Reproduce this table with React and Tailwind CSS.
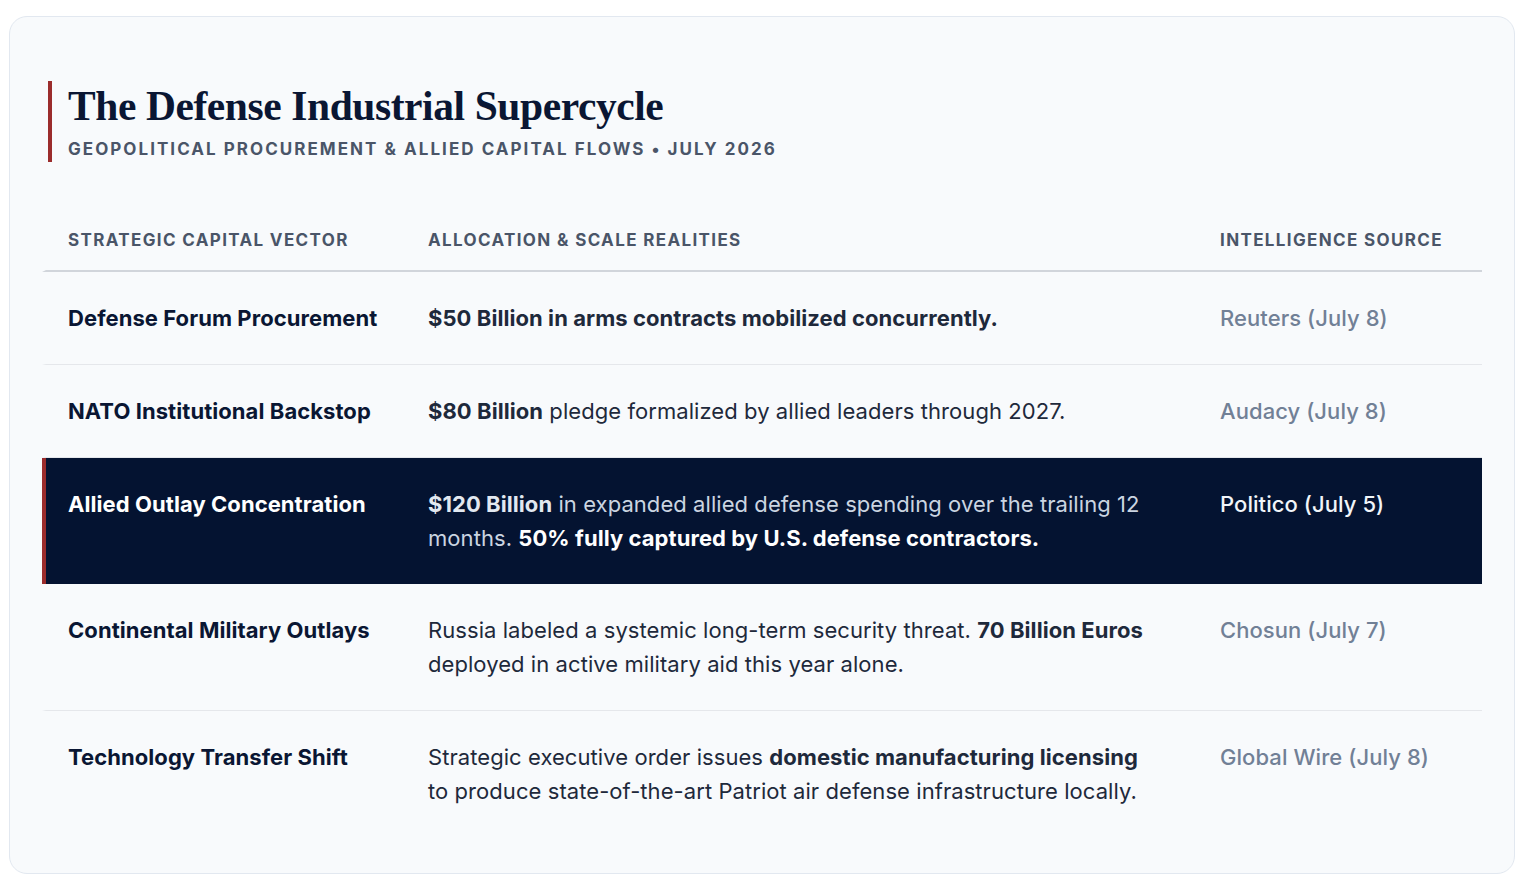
import React from "react";

const rows = [
  {
    vector: "Defense Forum Procurement",
    detail: (
      <>
        <b className="font-bold">$50 Billion in arms contracts mobilized concurrently.</b>
      </>
    ),
    source: "Reuters (July 8)",
  },
  {
    vector: "NATO Institutional Backstop",
    detail: (
      <>
        <b className="font-bold">$80 Billion</b> pledge formalized by allied leaders through 2027.
      </>
    ),
    source: "Audacy (July 8)",
  },
  {
    vector: "Allied Outlay Concentration",
    detail: (
      <>
        <b className="font-bold text-[#e2e8f0]">$120 Billion</b> in expanded allied defense spending over the trailing 12
        months. <b className="font-bold text-white">50% fully captured by U.S. defense contractors.</b>
      </>
    ),
    source: "Politico (July 5)",
    active: true,
  },
  {
    vector: "Continental Military Outlays",
    detail: (
      <>
        Russia labeled a systemic long-term security threat. <b className="font-bold">70 Billion Euros</b> deployed
        in active military aid this year alone.
      </>
    ),
    source: "Chosun (July 7)",
  },
  {
    vector: "Technology Transfer Shift",
    detail: (
      <>
        Strategic executive order issues <b className="font-bold">domestic manufacturing licensing</b> to produce
        state-of-the-art Patriot air defense infrastructure locally.
      </>
    ),
    source: "Global Wire (July 8)",
    last: true,
  },
];

export default function App() {
  return (
    <div className="min-h-screen bg-white pt-4 pl-[9px] font-['Inter',sans-serif]">
      <div className="w-[1506px] h-[858px] rounded-[18px] border border-[#e2e8f0] bg-[#f8fafc] px-8 pt-16">
        <div className="ml-[6px] border-l-4 border-[#9b2c2c] pl-4">
          <h1 className="font-['Liberation_Serif',serif] text-[41.5px] leading-[50px] font-bold tracking-[-0.01em] text-[#0a1633]">
            The Defense Industrial Supercycle
          </h1>
          <p className="mt-[6px] pb-[1px] text-[17px] leading-[24px] font-bold uppercase tracking-[0.12em] text-[#4a5568]">
            Geopolitical Procurement &amp; Allied Capital Flows • July 2026
          </p>
        </div>

        <div className="mt-[40px]">
          <div className="grid grid-cols-[356px_792px_1fr] border-l-4 border-b-2 border-l-transparent border-b-[#d1d5db] text-[17px] leading-[24px] font-bold uppercase tracking-[0.08em] text-[#4a5568]">
            <div className="pl-[22px] pt-[26px] pb-[18px]">Strategic Capital Vector</div>
            <div className="px-[26px] pt-[26px] pb-[18px]">Allocation &amp; Scale Realities</div>
            <div className="px-[26px] pt-[26px] pb-[18px]">Intelligence Source</div>
          </div>

          {rows.map((r) => (
            <div
              key={r.vector}
              className={
                r.active
                  ? "grid grid-cols-[356px_792px_1fr] border-l-4 border-[#9b2c2c] bg-[#041331] text-[22px] leading-[34px] tracking-[0.003em]"
                  : r.last
                  ? "grid grid-cols-[356px_792px_1fr] border-l-4 border-l-transparent text-[22px] leading-[34px] tracking-[0.003em]"
                  : "grid grid-cols-[356px_792px_1fr] border-l-4 border-b border-l-transparent border-b-[#e5e7eb] text-[22px] leading-[34px] tracking-[0.003em]"
              }
            >
              <div
                className={
                  r.active
                    ? "pl-[22px] pr-4 py-[29px] font-bold text-white"
                    : "pl-[22px] pr-4 py-[29px] font-bold text-[#0a1633]"
                }
              >
                {r.vector}
              </div>
              <div
                className={
                  r.active
                    ? "pl-[26px] pr-[40px] py-[29px] text-[#cbd5e1]"
                    : "pl-[26px] pr-[40px] py-[29px] text-[#1e293b]"
                }
              >
                {r.detail}
              </div>
              <div
                className={
                  r.active
                    ? "px-[26px] py-[29px] font-medium text-[#f1f5f9]"
                    : "px-[26px] py-[29px] font-medium text-[#718096]"
                }
              >
                {r.source}
              </div>
            </div>
          ))}
        </div>
      </div>
    </div>
  );
}
